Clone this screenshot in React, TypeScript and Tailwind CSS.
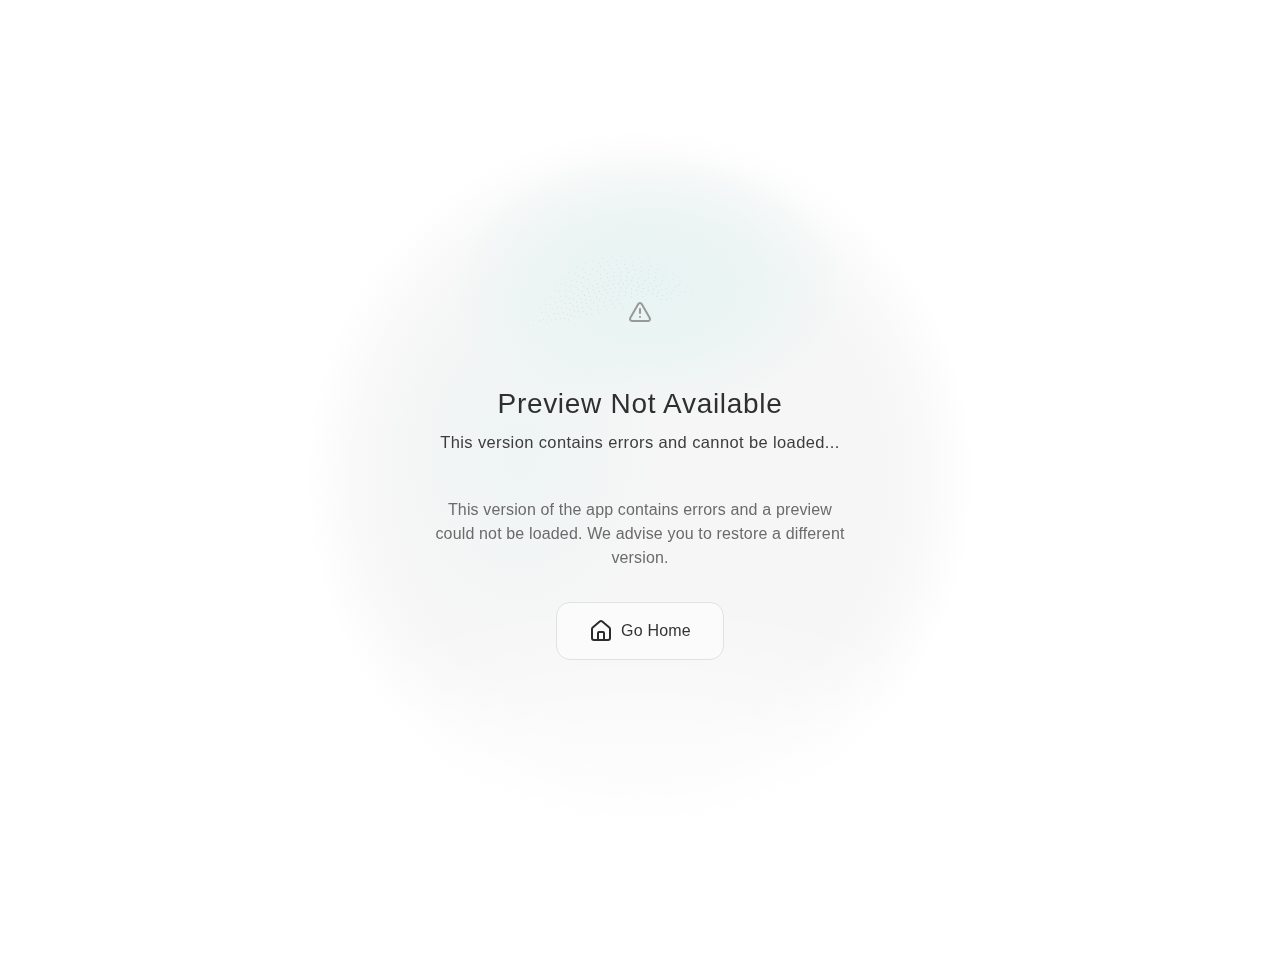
import React from "react";

function Dots() {
  const dots: { x: number; y: number; o: number }[] = [];
  const cx = 620;
  const cy = 345;
  for (let r = 30; r <= 92; r += 3.9) {
    const mid = 1 - Math.abs(r - 60) / 40;
    const step = (5 + (1 - mid) * 6) / r;
    for (let a = Math.PI * 1.02 + ((r * 7) % 5) * 0.012; a < Math.PI * 1.9; a += step) {
      const x = cx + r * Math.cos(a);
      const y = cy + r * Math.sin(a);
      const chord = 330 - (x - 528) * 0.216;
      if (y > chord) continue;
      if (x > 624 && x < 656 && y > 297) continue;
      dots.push({ x: x - 520, y: y - 245, o: 0.25 + mid * 0.4 });
    }
  }
  return (
    <svg
      className="absolute left-[-108px] top-[-55px]"
      width="180"
      height="95"
      viewBox="0 0 180 95"
      aria-hidden="true"
    >
      {dots.map((d, i) => (
        <circle key={i} cx={d.x} cy={d.y} r="0.45" fill="#a6b0b0" opacity={d.o} />
      ))}
    </svg>
  );
}

export default function App() {
  return (
    <main className="min-h-screen bg-white bg-[radial-gradient(ellipse_200px_135px_at_650px_285px,#e8f4f3_0%,rgba(232,244,243,0.9)_35%,rgba(232,244,243,0.45)_70%,rgba(232,244,243,0)_100%),radial-gradient(ellipse_140px_190px_at_520px_450px,rgba(232,244,243,0.55)_0%,rgba(232,244,243,0.3)_50%,rgba(232,244,243,0)_100%),radial-gradient(ellipse_460px_260px_at_640px_860px,rgba(255,255,255,0.7)_0%,rgba(255,255,255,0.55)_50%,rgba(255,255,255,0)_100%),radial-gradient(ellipse_335px_350px_at_640px_480px,#f6f6f6_0%,#f6f6f6_72%,#f9f9f9_85%,#fdfdfd_95%,#ffffff_100%)] font-['Liberation_Sans',Arial,sans-serif]">
      <div className="flex min-h-screen flex-col items-center justify-center will-change-transform">
        <div className="relative">
          <Dots />
          <svg
            className="relative h-6 w-6 text-[#999999]"
            viewBox="0 0 24 24"
            fill="none"
            stroke="currentColor"
            strokeWidth="2"
            strokeLinecap="round"
            strokeLinejoin="round"
            aria-hidden="true"
          >
            <path d="m21.73 18-8-14a2 2 0 0 0-3.48 0l-8 14A2 2 0 0 0 4 21h16a2 2 0 0 0 1.73-3" />
            <path d="M12 9v4" />
            <path d="M12 17h.01" />
          </svg>
        </div>
        <h1 className="mt-[62px] text-[28px] font-normal leading-[36px] tracking-[0.7px] text-[#2f2f2f]">
          Preview Not Available
        </h1>
        <p className="mt-[8px] text-[16.5px] leading-6 tracking-[0.38px] text-[#3d3d3d]">
          This version contains errors and cannot be loaded...
        </p>
        <p className="mt-[44px] w-[420px] text-center text-base leading-6 tracking-[0.15px] text-[#6b6b6b]">
          This version of the app contains errors and a preview could not be loaded. We advise you to restore a
          different version.
        </p>
        <button className="mt-[32px] flex h-[58px] w-[168px] items-center justify-center gap-2 rounded-[14px] border border-[#dfe2e2] bg-[#fbfbfb] text-base tracking-[0.2px] text-[#333333]">
          <svg
            className="h-6 w-6 text-[#2b2b2b]"
            viewBox="0 0 24 24"
            fill="none"
            stroke="currentColor"
            strokeWidth="2"
            strokeLinecap="round"
            strokeLinejoin="round"
            aria-hidden="true"
          >
            <path d="M15 21v-7a1 1 0 0 0-1-1h-4a1 1 0 0 0-1 1v7" />
            <path d="M3 10a2 2 0 0 1 .709-1.528l7-5.999a2 2 0 0 1 2.582 0l7 5.999A2 2 0 0 1 21 10v9a2 2 0 0 1-2 2H5a2 2 0 0 1-2-2z" />
          </svg>
          Go Home
        </button>
      </div>
    </main>
  );
}
